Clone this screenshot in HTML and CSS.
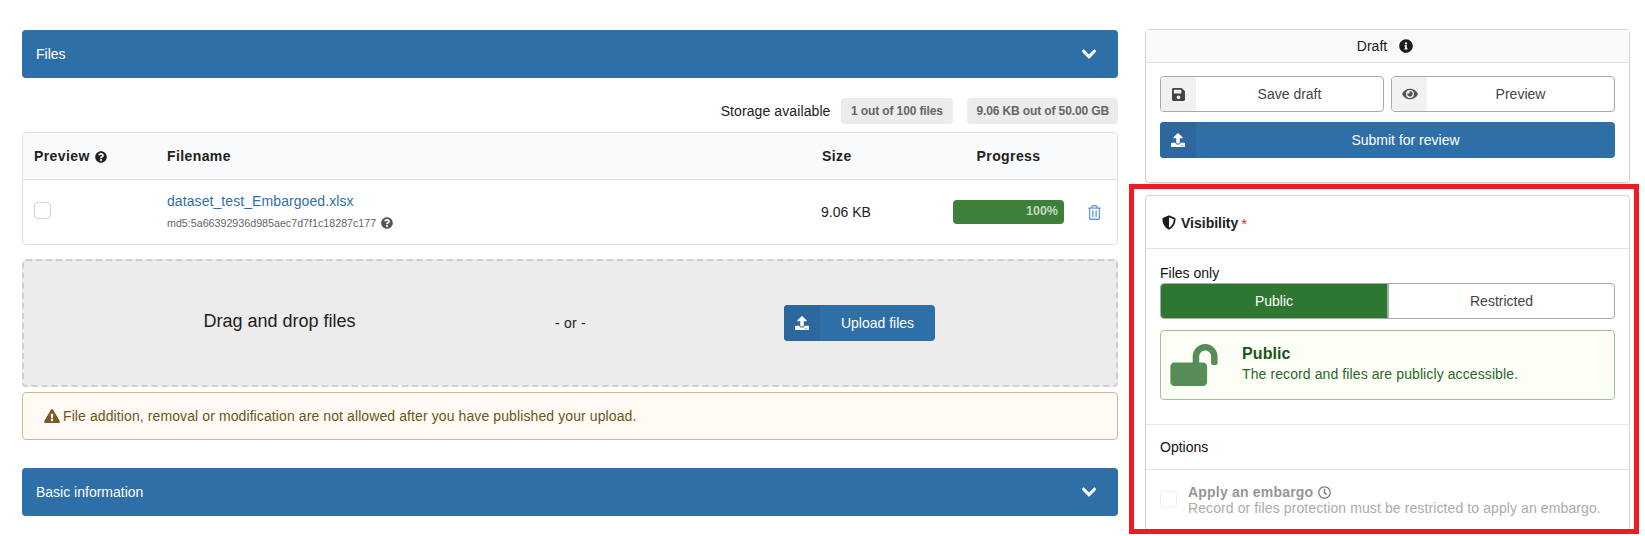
FILE: index.html
```html
<!DOCTYPE html>
<html lang="en">
<head>
<meta charset="utf-8">
<title>Upload</title>
<link rel="stylesheet" href="styles.css">
</head>
<body>
<div class="page">
  <main class="left">
    <div class="bar"><span>Files</span>
      <svg class="chev" viewBox="0 0 448 512"><path d="M207.029 381.476L12.686 187.132c-9.373-9.373-9.373-24.569 0-33.941l22.667-22.667c9.357-9.357 24.522-9.375 33.901-.04L224 284.505l154.745-154.021c9.379-9.335 24.544-9.317 33.901.04l22.667 22.667c9.373 9.373 9.373 24.569 0 33.941L240.971 381.476c-9.373 9.372-24.569 9.372-33.942 0z"/></svg>
    </div>
    <div class="storage">
      <span class="storage-text">Storage available</span>
      <span class="tag">1 out of 100 files</span>
      <span class="tag">9.06 KB out of 50.00 GB</span>
    </div>
    <section class="table">
      <div class="row head">
        <div class="cell">Preview
          <svg class="help-sm" viewBox="0 0 512 512"><path d="M504 256c0 136.997-111.043 248-248 248S8 392.997 8 256C8 119.083 119.043 8 256 8s248 111.083 248 248zM262.655 90c-54.497 0-89.255 22.957-116.549 63.758-3.536 5.286-2.353 12.415 2.715 16.258l34.699 26.31c5.205 3.947 12.621 3.008 16.665-2.122 17.864-22.658 30.113-35.797 57.303-35.797 20.429 0 45.698 13.148 45.698 32.958 0 14.976-12.363 22.667-32.534 33.976C247.128 238.528 216 254.941 216 296v4c0 6.627 5.373 12 12 12h56c6.627 0 12-5.373 12-12v-1.333c0-28.462 83.186-29.647 83.186-106.667 0-58.002-60.165-102-116.531-102zM256 338c-25.365 0-46 20.635-46 46 0 25.364 20.635 46 46 46s46-20.636 46-46c0-25.365-20.635-46-46-46z"/></svg>
        </div>
        <div class="cell">Filename</div>
        <div class="cell">Size</div>
        <div class="cell center">Progress</div>
        <div class="cell"></div>
      </div>
      <div class="row body">
        <div class="cell"><span class="check"></span></div>
        <div class="cell file">
          <a class="file-name" href="#">dataset_test_Embargoed.xlsx</a>
          <div class="md5">md5:5a66392936d985aec7d7f1c18287c177
            <svg class="help-md" viewBox="0 0 512 512"><path d="M504 256c0 136.997-111.043 248-248 248S8 392.997 8 256C8 119.083 119.043 8 256 8s248 111.083 248 248zM262.655 90c-54.497 0-89.255 22.957-116.549 63.758-3.536 5.286-2.353 12.415 2.715 16.258l34.699 26.31c5.205 3.947 12.621 3.008 16.665-2.122 17.864-22.658 30.113-35.797 57.303-35.797 20.429 0 45.698 13.148 45.698 32.958 0 14.976-12.363 22.667-32.534 33.976C247.128 238.528 216 254.941 216 296v4c0 6.627 5.373 12 12 12h56c6.627 0 12-5.373 12-12v-1.333c0-28.462 83.186-29.647 83.186-106.667 0-58.002-60.165-102-116.531-102zM256 338c-25.365 0-46 20.635-46 46 0 25.364 20.635 46 46 46s46-20.636 46-46c0-25.365-20.635-46-46-46z"/></svg>
          </div>
        </div>
        <div class="cell size">9.06 KB</div>
        <div class="cell"><div class="progress">100%</div></div>
        <div class="cell trash-cell">
          <svg class="trash" viewBox="0 0 448 512"><path d="M268 416h24a12 12 0 0 0 12-12V188a12 12 0 0 0-12-12h-24a12 12 0 0 0-12 12v216a12 12 0 0 0 12 12zM432 80h-82.41l-34-56.7A48 48 0 0 0 274.41 0H173.59a48 48 0 0 0-41.16 23.3L98.41 80H16A16 16 0 0 0 0 96v16a16 16 0 0 0 16 16h16v336a48 48 0 0 0 48 48h288a48 48 0 0 0 48-48V128h16a16 16 0 0 0 16-16V96a16 16 0 0 0-16-16zM171.84 50.91A6 6 0 0 1 177 48h94a6 6 0 0 1 5.15 2.91L293.61 80H154.39zM368 464H80V128h288zm-212-48h24a12 12 0 0 0 12-12V188a12 12 0 0 0-12-12h-24a12 12 0 0 0-12 12v216a12 12 0 0 0 12 12z"/></svg>
        </div>
      </div>
    </section>
    <section class="drop">
      <div class="drop-title">Drag and drop files</div>
      <div class="drop-or">- or -</div>
      <div class="drop-action">
        <button class="btn primary upload">
          <span class="btn-icon"><svg class="ico-up" viewBox="0 0 512 512"><path d="M296 384h-80c-13.3 0-24-10.700-24-24V192h-87.700c-17.800 0-26.700-21.500-14.100-34.100L242.300 5.700c7.500-7.500 19.800-7.500 27.300 0l152.200 152.200c12.600 12.600 3.700 34.100-14.100 34.100H320v168c0 13.300-10.700 24-24 24zm216-8v112c0 13.300-10.700 24-24 24H24c-13.300 0-24-10.700-24-24V376c0-13.300 10.700-24 24-24h136v8c0 30.900 25.100 56 56 56h80c30.900 0 56-25.100 56-56v-8h136c13.300 0 24 10.700 24 24zm-124 88c0-11-9-20-20-20s-20 9-20 20 9 20 20 20 20-9 20-20zm64 0c0-11-9-20-20-20s-20 9-20 20 9 20 20 20 20-9 20-20z"/></svg></span>
          <span class="btn-text">Upload files</span>
        </button>
      </div>
    </section>
    <div class="alert">
      <svg class="warn" viewBox="0 0 576 512"><path d="M569.517 440.013C587.975 472.007 564.806 512 527.940 512H48.054c-36.937 0-59.999-40.055-41.577-71.987L246.423 24c18.467-32.009 64.720-31.951 83.154 0l239.940 416.013zM288 354c-25.405 0-46 20.595-46 46s20.595 46 46 46 46-20.595 46-46-20.595-46-46-46zm-43.673-165.346l7.418 136c.347 6.364 5.609 11.346 11.982 11.346h48.546c6.373 0 11.635-4.982 11.982-11.346l7.418-136c.375-6.874-5.098-12.654-11.982-12.654h-63.383c-6.884 0-12.356 5.780-11.981 12.654z"/></svg>
      <span>File addition, removal or modification are not allowed after you have published your upload.</span>
    </div>
    <div class="bar basic"><span>Basic information</span>
      <svg class="chev" viewBox="0 0 448 512"><path d="M207.029 381.476L12.686 187.132c-9.373-9.373-9.373-24.569 0-33.941l22.667-22.667c9.357-9.357 24.522-9.375 33.901-.04L224 284.505l154.745-154.021c9.379-9.335 24.544-9.317 33.901.04l22.667 22.667c9.373 9.373 9.373 24.569 0 33.941L240.971 381.476c-9.373 9.372-24.569 9.372-33.942 0z"/></svg>
    </div>
  </main>

  <aside class="right">
    <section class="card draft">
      <header class="draft-head">
        <span>Draft</span>
        <svg class="info" viewBox="0 0 512 512"><path d="M256 8C119.043 8 8 119.083 8 256c0 136.997 111.043 248 248 248s248-111.003 248-248C504 119.083 392.957 8 256 8zm0 110c23.196 0 42 18.804 42 42s-18.804 42-42 42-42-18.804-42-42 18.804-42 42-42zm56 254c0 6.627-5.373 12-12 12h-88c-6.627 0-12-5.373-12-12v-24c0-6.627 5.373-12 12-12h12v-64h-12c-6.627 0-12-5.373-12-12v-24c0-6.627 5.373-12 12-12h64c6.627 0 12 5.373 12 12v100h12c6.627 0 12 5.373 12 12v24z"/></svg>
      </header>
      <div class="draft-body">
        <div class="btn-row">
          <button class="btn basic-btn">
            <span class="btn-icon"><svg class="ico-save" viewBox="0 0 448 512"><path d="M433.941 129.941l-83.882-83.882A48 48 0 0 0 316.118 32H48C21.490 32 0 53.490 0 80v352c0 26.510 21.490 48 48 48h352c26.510 0 48-21.490 48-48V163.882a48 48 0 0 0-14.059-33.941zM224 416c-35.346 0-64-28.654-64-64 0-35.346 28.654-64 64-64s64 28.654 64 64c0 35.346-28.654 64-64 64zm96-304.520V212c0 6.627-5.373 12-12 12H76c-6.627 0-12-5.373-12-12V108c0-6.627 5.373-12 12-12h228.520c3.183 0 6.235 1.264 8.485 3.515l3.480 3.480A11.996 11.996 0 0 1 320 111.480z"/></svg></span>
            <span class="btn-text">Save draft</span>
          </button>
          <button class="btn basic-btn">
            <span class="btn-icon"><svg class="ico-eye" viewBox="0 0 576 512"><path d="M572.520 241.400C518.290 135.590 410.930 64 288 64S57.680 135.640 3.480 241.410a32.350 32.350 0 0 0 0 29.190C57.710 376.410 165.070 448 288 448s230.320-71.640 284.520-177.410a32.350 32.350 0 0 0 0-29.190zM288 400a144 144 0 1 1 144-144 143.930 143.930 0 0 1-144 144zm0-240a95.310 95.310 0 0 0-25.310 3.790 47.850 47.850 0 0 1-66.900 66.900A95.780 95.780 0 1 0 288 160z"/></svg></span>
            <span class="btn-text">Preview</span>
          </button>
        </div>
        <button class="btn primary submit">
          <span class="btn-icon"><svg class="ico-up" viewBox="0 0 512 512"><path d="M296 384h-80c-13.300 0-24-10.700-24-24V192h-87.700c-17.800 0-26.700-21.500-14.100-34.100L242.300 5.700c7.500-7.500 19.800-7.500 27.300 0l152.200 152.200c12.600 12.600 3.700 34.100-14.100 34.100H320v168c0 13.300-10.700 24-24 24zm216-8v112c0 13.300-10.700 24-24 24H24c-13.300 0-24-10.700-24-24V376c0-13.300 10.700-24 24-24h136v8c0 30.900 25.100 56 56 56h80c30.900 0 56-25.100 56-56v-8h136c13.300 0 24 10.700 24 24zm-124 88c0-11-9-20-20-20s-20 9-20 20 9 20 20 20 20-9 20-20zm64 0c0-11-9-20-20-20s-20 9-20 20 9 20 20 20 20-9 20-20z"/></svg></span>
          <span class="btn-text">Submit for review</span>
        </button>
      </div>
    </section>

    <section class="card visibility">
      <header class="vis-head">
        <svg class="shield" viewBox="0 0 512 512"><path d="M466.500 83.700l-192-80a48.150 48.150 0 0 0-36.900 0l-192 80C27.700 91.100 16 108.600 16 128c0 198.500 114.500 335.700 221.500 380.300 11.800 4.900 25.100 4.900 36.900 0C360.100 472.600 496 349.300 496 128c0-19.400-11.700-36.900-29.500-44.300zM256.100 446.300l-.1-381 175.900 73.300c-3.300 151.400-82.100 261.100-175.800 307.700z"/></svg>
        <strong>Visibility</strong><span class="req">*</span>
      </header>
      <div class="vis-main">
        <div class="files-only">Files only</div>
        <div class="toggle">
          <span class="toggle-on">Public</span>
          <span class="toggle-off">Restricted</span>
        </div>
        <div class="message">
          <svg class="unlock" viewBox="0 0 576 512"><path d="M423.500 0C339.500.3 272 69.500 272 153.500V224H48c-26.500 0-48 21.500-48 48v192c0 26.500 21.500 48 48 48h352c26.500 0 48-21.500 48-48V272c0-26.500-21.500-48-48-48h-48v-71.100c0-39.600 31.700-72.500 71.300-72.900 40-.4 72.700 32.100 72.700 72v80c0 13.300 10.700 24 24 24h32c13.300 0 24-10.700 24-24v-80C576 68 507.500-.3 423.500 0z"/></svg>
          <div class="message-text">
            <div class="message-title">Public</div>
            <div>The record and files are publicly accessible.</div>
          </div>
        </div>
      </div>
      <div class="options">Options</div>
      <div class="embargo">
        <span class="check off"></span>
        <div class="embargo-text">
          <div class="embargo-title">Apply an embargo
            <svg class="clock" viewBox="0 0 512 512"><path d="M256 8C119 8 8 119 8 256s111 248 248 248 248-111 248-248S393 8 256 8zm0 448c-110.500 0-200-89.500-200-200S145.500 56 256 56s200 89.500 200 200-89.500 200-200 200zm61.800-104.400l-84.900-61.700c-3.100-2.300-4.900-5.900-4.900-9.700V116c0-6.600 5.400-12 12-12h32c6.600 0 12 5.400 12 12v141.700l66.800 48.600c5.400 3.900 6.500 11.400 2.600 16.800L334.600 349c-3.900 5.300-11.400 6.500-16.800 2.600z"/></svg>
          </div>
          <div class="embargo-desc">Record or files protection must be restricted to apply an embargo.</div>
        </div>
      </div>
    </section>
    <div class="highlight"></div>
  </aside>
</div>
</body>
</html>
```

FILE: styles.css
```css
* { box-sizing: border-box; }
html, body { margin: 0; height: 536px; overflow: hidden; background: #fff; }
body { font: 14px/20px "Liberation Sans", Arial, sans-serif; color: #212121; }
svg { display: inline-block; fill: currentColor; flex: none; }

.page { display: flex; align-items: flex-start; padding: 29px 0 0 22px; gap: 27px; }
.left { width: 1096px; padding-top: 1px; display: flex; flex-direction: column; }
.right { width: 485px; position: relative; display: flex; flex-direction: column; gap: 12px; }

.bar { height: 48px; padding: 0 22px 0 14px; background: #2f6fa7; color: #fff; border-radius: 4px; display: flex; align-items: center; justify-content: space-between; }
.chev { width: 14px; height: 16px; stroke: currentColor; stroke-width: 28; }
.basic { margin-top: 28px; }

.storage { display: flex; justify-content: flex-end; align-items: center; margin-top: 20px; height: 26px; }
.storage-text { margin-right: 10px; letter-spacing: .1px; }
.tag { height: 26px; line-height: 26px; padding: 0 10.5px; background: #ececec; color: #666; font-size: 12px; font-weight: 700; border-radius: 4px; letter-spacing: -.12px; }
.tag + .tag { margin-left: 14px; padding: 0 9px; }

.table { margin-top: 8px; border: 1px solid #dedfe1; border-radius: 4px; height: 113px; overflow: hidden; }
.row { display: grid; grid-template-columns: 133px 655px 131px 111px 1fr; padding-left: 11px; align-items: center; }
.head { height: 47px; background: #f9fafb; border-bottom: 1px solid #dedfe1; font-weight: 700; letter-spacing: .4px; }
.body { height: 64px; }
.center { text-align: center; }
.help-sm { width: 12px; height: 12px; margin-left: 1px; vertical-align: -2px; color: #222; }
.help-md { width: 12px; height: 12px; margin-left: 2px; vertical-align: -2px; color: #555; }
.check { display: block; width: 17px; height: 17px; border: 1px solid #d4d4d5; border-radius: 4px; background: #fff; margin-top: -3px; }
.file { margin-top: -4px; }
.file-name { color: #2f6fa7; text-decoration: none; display: block; letter-spacing: .08px; }
.md5 { font-size: 10.7px; line-height: 14px; color: #666; margin-top: 5px; }
.size { margin-left: -1px; }
.progress { width: 111px; height: 24px; background: #3c803a; border-radius: 4px; color: rgba(255, 255, 255, .7); font-size: 12.5px; font-weight: 700; line-height: 22px; text-align: right; padding-right: 6px; }
.trash-cell { padding-left: 24px; display: flex; }
.trash { width: 13px; height: 15px; color: #6a9ecb; }

.drop { margin-top: 14px; height: 128px; background: #ececec; border: 2px dashed #cfcfcf; border-radius: 4px; display: grid; grid-template-columns: 511px 71px 1fr; padding-right: 3px; align-items: center; text-align: center; }
.drop-title { font-size: 18px; margin-bottom: 4px; }
.drop-or { letter-spacing: .2px; }
.drop-action { display: flex; justify-content: center; }

.btn { font: inherit; height: 36px; padding: 0; border: 0; border-radius: 4px; display: flex; align-items: stretch; overflow: hidden; cursor: pointer; }
.btn-icon { width: 36px; flex: none; display: flex; align-items: center; justify-content: center; }
.btn-text { flex: 1; align-self: center; text-align: center; }
.primary { background: #2f6fa7; color: #fff; }
.primary .btn-icon { background: #2c689d; }
.upload { width: 151px; }
.submit { width: 100%; margin-top: 10px; }
.basic-btn { flex: 1; background: #fff; color: #444; border: 1px solid #aaa; }
.basic-btn .btn-icon { width: 35px; background: #f2f2f2; }
.ico-up { width: 14px; height: 14px; }
.ico-save { width: 13px; height: 15px; color: #444; }
.ico-eye { width: 16px; height: 14px; color: #555; }

.alert { margin-top: 5px; height: 48px; background: #fffaf3; border: 1px solid #c9ba9b; border-radius: 4px; color: #6f5423; display: flex; align-items: center; padding-left: 21px; letter-spacing: .1px; }
.warn { width: 16px; height: 14px; margin-right: 3px; color: #7a5b27; }

.card { border: 1px solid #d4d4d5; border-radius: 4px; background: #fff; }
.draft { height: 154px; box-shadow: 0 1px 2px rgba(34, 36, 38, .1); }
.draft-head { height: 33px; background: #f9f9f9; border-bottom: 1px solid #e3e3e3; display: flex; justify-content: center; align-items: center; gap: 12px; padding-right: 5px; }
.info { width: 14px; height: 14px; color: #1b1b1b; }
.draft-body { padding: 13px 14px 0; }
.btn-row { display: flex; gap: 7px; }

.visibility { height: 336px; }
.vis-head { height: 53px; padding: 1px 14px 0 16px; border-bottom: 1px solid #e3e3e3; display: flex; align-items: center; }
.shield { width: 14px; height: 15px; margin-right: 5px; color: #1b1b1b; }
.req { color: #db2828; margin: 2px 0 0 3px; font-size: 15px; }
.vis-main { padding: 14px 14px 0; height: 176px; border-bottom: 1px solid #e9e9e9; }
.files-only { line-height: 20px; color: #111; }
.toggle { display: flex; height: 36px; border: 1px solid #aaa; border-radius: 4px; overflow: hidden; text-align: center; line-height: 34px; }
.toggle-on { width: 228px; background: #2d7730; color: #fff; border-right: 2px solid #aaa; }
.toggle-off { flex: 1; color: #444; }
.message { margin-top: 11px; height: 70px; border: 1px solid #a3c293; border-radius: 4px; background: #fcfff5; color: #2c662d; display: flex; align-items: center; padding-left: 9px; letter-spacing: .1px; }
.unlock { width: 48px; height: 42px; color: #578d58; margin-right: 24px; }
.message-text { line-height: 20px; margin-bottom: 3px; }
.message-title { font-size: 16px; font-weight: 700; color: #1a531b; line-height: 20px; }
.options { height: 45px; padding: 0 0 1px 14px; display: flex; align-items: center; border-bottom: 1px solid #e3e3e3; color: #111; }
.embargo { display: flex; padding: 14px 0 0 14px; gap: 11px; }
.check.off { border-color: #f0f0f0; margin-top: 7px; }
.embargo-text { line-height: 16px; }
.embargo-title { font-weight: 700; color: #969696; letter-spacing: .2px; }
.clock { width: 13px; height: 13px; vertical-align: -2px; margin-left: 1px; color: #777; }
.embargo-desc { color: #ababab; letter-spacing: .1px; }

.highlight { position: absolute; left: -16px; top: 155px; width: 510px; height: 350px; border: 5px solid #ed1c24; pointer-events: none; }
```
